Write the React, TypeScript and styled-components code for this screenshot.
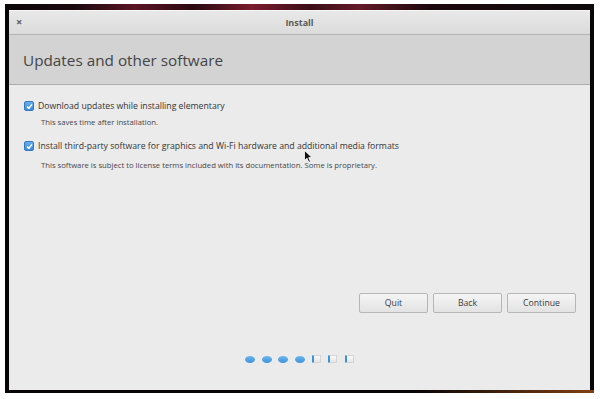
import React from "react";
import styled, { createGlobalStyle } from "styled-components";

const GlobalStyle = createGlobalStyle`
  html, body {
    margin: 0;
    padding: 0;
    background: #ffffff;
  }
  body {
    font-family: "Open Sans", "Noto Sans", sans-serif;
  }
`;

const Frame = styled.div`
  box-sizing: border-box;
  width: 589px;
  height: 389px;
  margin: 4px 0 0 5px;
  padding: 6px 4px 3px 4px;
  background:
    linear-gradient(90deg, transparent 70%, rgba(140, 70, 20, 0.9) 100%) bottom / 100% 3px no-repeat,
    linear-gradient(90deg, #0c0709 0%, #1a0a0e 12%, #5c1424 22%, #2a0a12 32%, #7a1c2e 42%, #3a0e18 52%, #651a28 60%, #1c080c 72%, #0d0a0b 100%) top / 100% 6px no-repeat,
    #070506;
`;

const Window = styled.div`
  display: flex;
  flex-direction: column;
  height: 100%;
  background: #ebebeb;
  position: relative;
`;

const TitleBar = styled.div`
  position: relative;
  height: 24px;
  display: flex;
  align-items: center;
  justify-content: center;
  background: linear-gradient(#e9e9e9, #dbdbdb);
  border-bottom: 1px solid #b4b4b4;
  box-shadow: inset 0 1px 0 #f6f6f6;
`;

const Close = styled.span`
  position: absolute;
  left: 7px;
  top: 5px;
  font-size: 11px;
  font-weight: 700;
  line-height: 14px;
  color: #5a5a5a;
`;

const Title = styled.span`
  font-size: 9px;
  font-weight: 700;
  color: #5b5b5b;
`;

const Header = styled.div`
  height: 49px;
  display: flex;
  align-items: center;
  padding-left: 14px;
  background: #d3d3d3;
  border-bottom: 1px solid #adadad;
  font-size: 15.3px;
  color: #454545;
`;

const Content = styled.div`
  flex: 1;
  display: flex;
  flex-direction: column;
  padding: 16px 14px 0 15px;
`;

const Options = styled.div`
  display: flex;
  flex-direction: column;
  gap: 14px;
`;

const Option = styled.div`
  display: grid;
  grid-template-columns: 10px 1fr;
  column-gap: 4px;
  align-items: center;
`;

const Check = styled.span`
  box-sizing: border-box;
  width: 10px;
  height: 10px;
  border-radius: 2px;
  border: 1px solid #3479c2;
  background: linear-gradient(#66b0ee, #3a8ad8);
  display: flex;
  align-items: center;
  justify-content: center;
`;

const Label = styled.span`
  font-size: 8.7px;
  line-height: 10px;
  color: #333333;
`;

const Note = styled.span<{ $gap: number }>`
  grid-column: 2;
  margin-top: ${(p) => p.$gap}px;
  padding-left: 3px;
  font-size: 7.7px;
  line-height: 10px;
  color: #474747;
`;

const Buttons = styled.div`
  margin-top: auto;
  display: flex;
  justify-content: flex-end;
  gap: 5px;
`;

const Button = styled.button`
  box-sizing: border-box;
  width: 69px;
  height: 20px;
  border: 1px solid #b6b6b6;
  border-radius: 2px;
  background: linear-gradient(#f5f5f5, #e3e3e3);
  font-family: "Open Sans", "Noto Sans", sans-serif;
  font-size: 8.7px;
  color: #3c3c3c;
  padding: 0;
`;

const Dots = styled.div`
  display: flex;
  justify-content: center;
  align-items: center;
  gap: 6.6px;
  margin: 42px 0 27px;
`;

const Dot = styled.span<{ $done: boolean }>`
  box-sizing: border-box;
  height: ${(p) => (p.$done ? 7 : 8)}px;
  width: ${(p) => (p.$done ? 10 : 9)}px;
  margin-right: ${(p) => (p.$done ? 0 : 1)}px;
  border-radius: ${(p) => (p.$done ? "50%" : "1px")};
  background: ${(p) =>
    p.$done ? "linear-gradient(#6db6ee, #3b92da)" : "linear-gradient(#fafafa, #e4e4e4)"};
  border: ${(p) => (p.$done ? "none" : "1px solid #d4d4d4")};
  border-left: ${(p) => (p.$done ? "none" : "2px solid #3b92da")};
`;

const Cursor = styled.svg`
  position: absolute;
  left: 295px;
  top: 140px;
`;

const CheckMark = () => (
  <svg width="7" height="7" viewBox="0 0 7 7">
    <polyline points="1,3.6 2.8,5.4 6,1.4" fill="none" stroke="#fff" strokeWidth="1.5" />
  </svg>
);

const options = [
  {
    label: "Download updates while installing elementary",
    note: "This saves time after installation.",
    gap: 6,
  },
  {
    label: "Install third-party software for graphics and Wi-Fi hardware and additional media formats",
    note: "This software is subject to license terms included with its documentation. Some is proprietary.",
    gap: 9,
  },
];

const steps = [true, true, true, true, false, false, false];

export default function App() {
  return (
    <>
      <GlobalStyle />
      <Frame>
        <Window>
          <TitleBar>
            <Close>×</Close>
            <Title>Install</Title>
          </TitleBar>
          <Header>Updates and other software</Header>
          <Content>
            <Options>
              {options.map((o) => (
                <Option key={o.label}>
                  <Check>
                    <CheckMark />
                  </Check>
                  <Label>{o.label}</Label>
                  <Note $gap={o.gap}>{o.note}</Note>
                </Option>
              ))}
            </Options>
            <Buttons>
              <Button>Quit</Button>
              <Button>Back</Button>
              <Button>Continue</Button>
            </Buttons>
            <Dots>
              {steps.map((d, i) => (
                <Dot key={i} $done={d} />
              ))}
            </Dots>
          </Content>
          <Cursor width="9" height="13" viewBox="0 0 9 13">
            <path d="M0.5 0.5 L0.5 10.5 L3 8.2 L4.8 12.3 L6.4 11.6 L4.7 7.6 L8 7.6 Z" fill="#111" stroke="#fff" strokeWidth="0.8" />
          </Cursor>
        </Window>
      </Frame>
    </>
  );
}
